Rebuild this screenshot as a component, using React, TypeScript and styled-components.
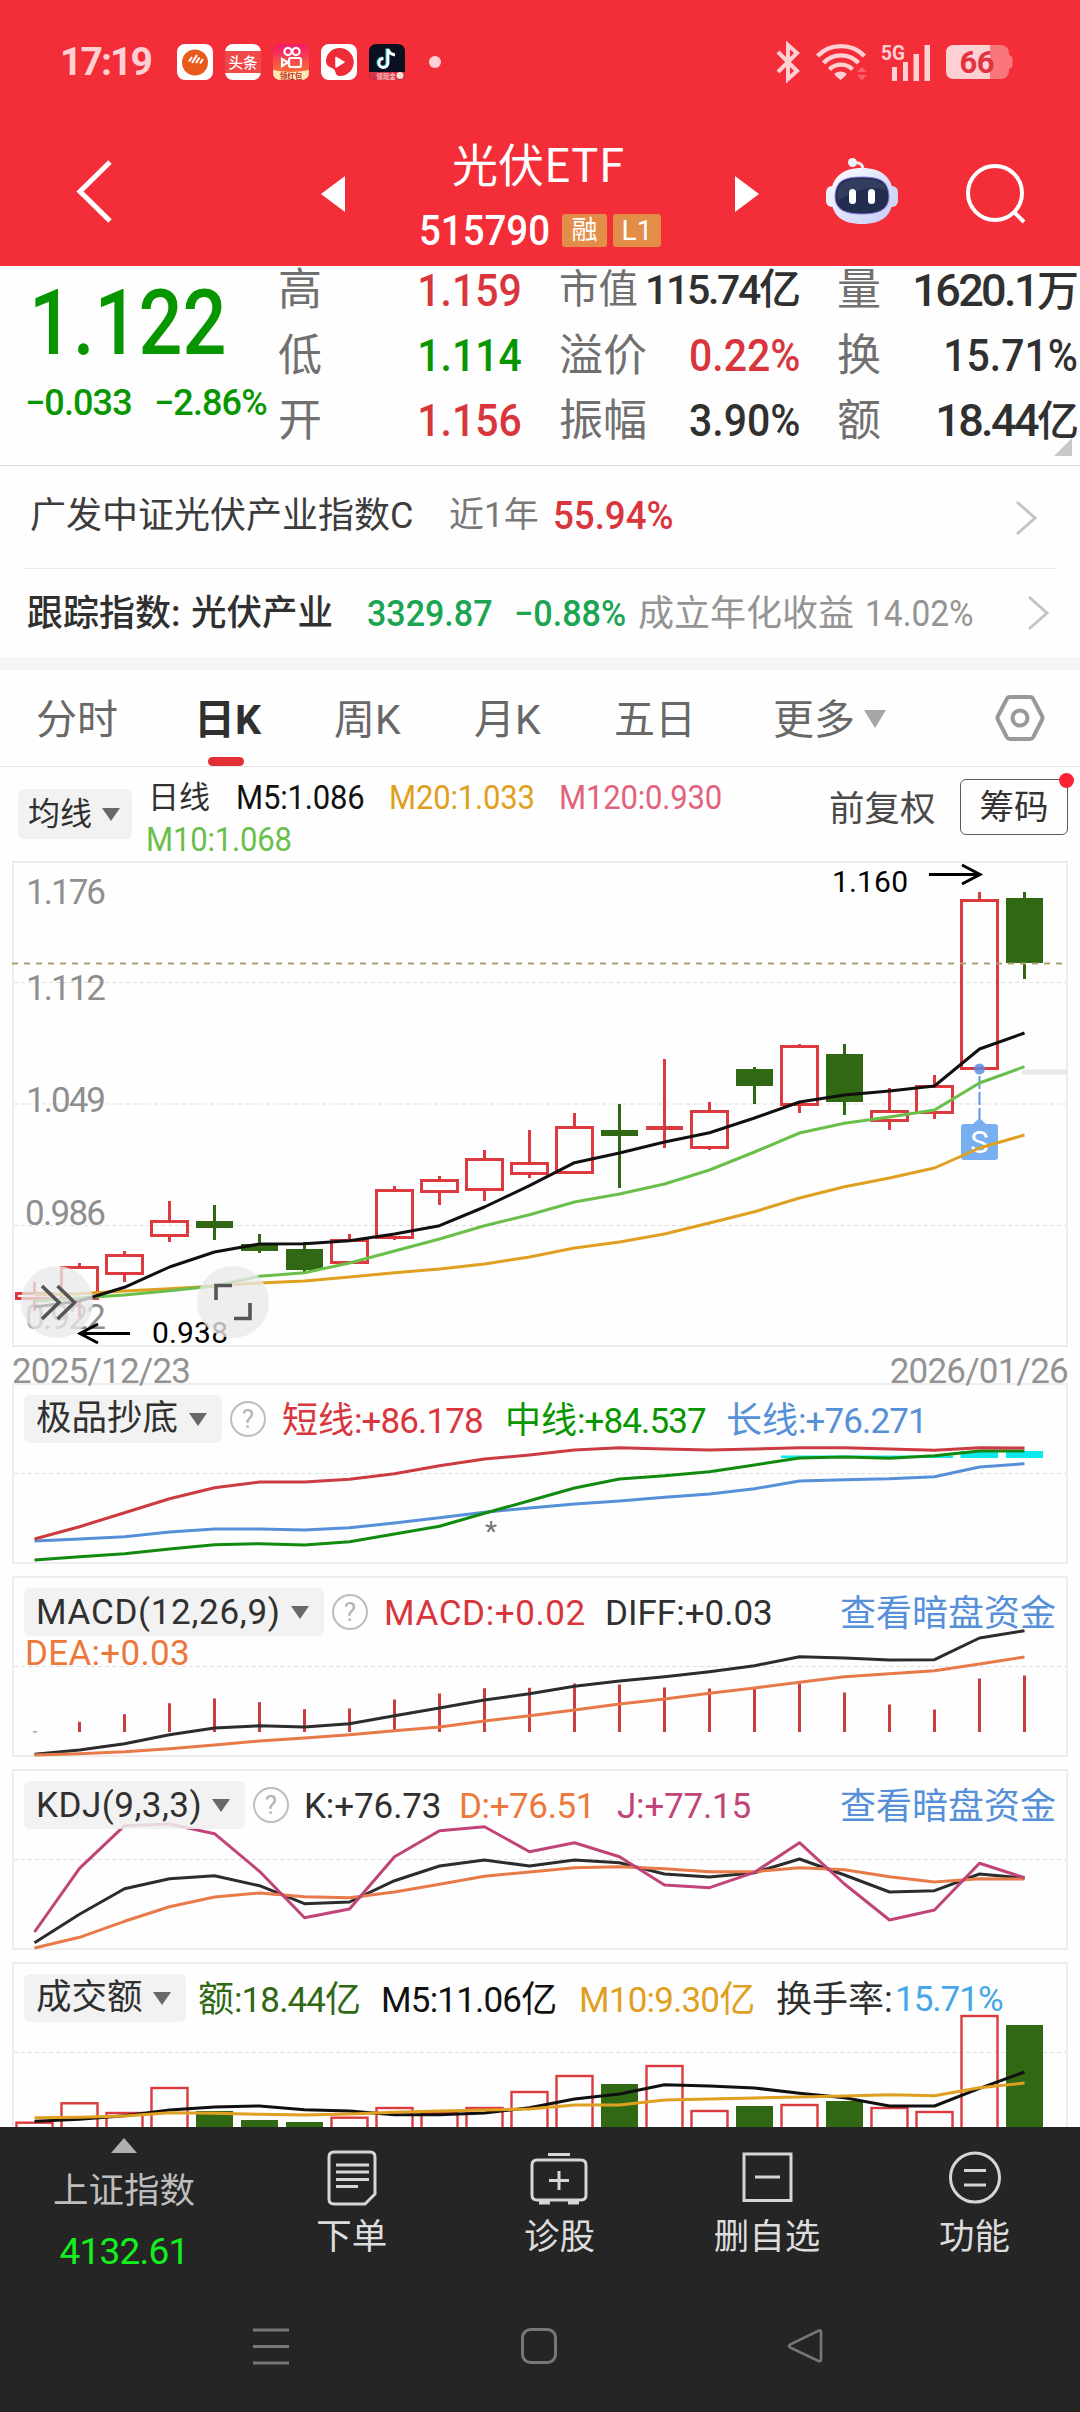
import React from "react";
import styled, { createGlobalStyle } from "styled-components";

const RED = "#d8363c";
const GREEN = "#089600";
const CANDLE_RED = "#dc3a3e";
const CANDLE_GREEN = "#306814";
const INK = "#303030";

const Global = createGlobalStyle`
  * { box-sizing: border-box; }
  body { margin: 0; background: #fff; }
`;

const Screen = styled.div`
  width: 1080px;
  height: 2412px;
  overflow: hidden;
  display: flex;
  flex-direction: column;
  background: #fefefe;
  color: ${INK};
  font-family: Roboto, "Noto Sans CJK SC", sans-serif;
  line-height: 1;
`;

/* A run of text in a box of known width; `sp` tracks the glyphs, `nx` condenses them. */
const Txt = styled.span<{
  s: number; w?: number; ml?: number; sp?: number; c?: string; b?: number; right?: boolean; up?: number; down?: number; nx?: number;
}>`
  flex: none;
  display: block;
  white-space: nowrap;
  font-size: ${(p) => p.s}px;
  width: ${(p) => (p.w ? p.w + "px" : "auto")};
  margin-left: ${(p) => p.ml ?? 0}px;
  letter-spacing: ${(p) => p.sp ?? 0}px;
  color: ${(p) => p.c ?? "inherit"};
  font-weight: ${(p) => p.b ?? 400};
  text-align: ${(p) => (p.right ? "right" : "left")};
  padding-bottom: ${(p) => p.up ?? 0}px;
  padding-top: ${(p) => p.down ?? 0}px;
  transform: ${(p) => (p.nx ? `scaleX(${p.nx})` : "none")};
  transform-origin: ${(p) => (p.right ? "right" : "left")} center;
`;

const Han = styled.span<{ s: number; sp?: number }>`
  font-size: ${(p) => p.s}px;
  letter-spacing: ${(p) => p.sp ?? 0}px;
`;

/* ---------- header ---------- */
const Header = styled.header`
  flex: none;
  height: 266px;
  background: #f32e38;
  color: #fff;
`;
const StatusBar = styled.div`
  height: 124px;
  padding: 0 67px 0 60px;
  display: flex;
  align-items: center;
  justify-content: space-between;
`;
const StatusGroup = styled.div<{ gap: number }>`
  display: flex;
  align-items: center;
  gap: ${(p) => p.gap}px;
`;
const StatusDot = styled.i`
  width: 12px;
  height: 12px;
  margin-left: 12px;
  border-radius: 50%;
  background: #ffd3d5;
`;
const TitleBar = styled.div`
  height: 142px;
  display: flex;
  align-items: flex-start;
`;
const Glyph = styled.svg<{ ml?: number; mt?: number }>`
  flex: none;
  display: block;
  overflow: visible;
  margin-left: ${(p) => p.ml ?? 0}px;
  margin-top: ${(p) => p.mt ?? 0}px;
`;
const TitleBlock = styled.div`
  width: 250px;
  margin-left: 70px;
  padding-top: 15px;
  display: flex;
  flex-direction: column;
`;
const Title = styled.h1`
  margin: 0 0 0 37px;
  font: 400 46px/46px "Noto Sans CJK SC", sans-serif;
  white-space: nowrap;
`;
const CodeRow = styled.div`
  display: flex;
  align-items: center;
  height: 42px;
  margin-top: 24px;
  padding-left: 4px;
`;
const Tag = styled.span<{ w: number; s: number; ml: number }>`
  width: ${(p) => p.w}px;
  margin-left: ${(p) => p.ml}px;
  height: 33px;
  border-radius: 3px;
  background: #e28e48;
  font-size: ${(p) => p.s}px;
  line-height: 33px;
  text-align: center;
`;

/* ---------- quote ---------- */
const Quote = styled.section`
  flex: none;
  height: 200px;
  display: flex;
  border-bottom: 1px solid #dedede;
  position: relative;
`;
const PriceCol = styled.div`
  width: 278px;
  color: ${GREEN};
`;
const ChangeRow = styled.div`
  display: flex;
  padding: 16px 0 0 25px;
`;
const Stats = styled.div<{ w: number; ml?: number }>`
  width: ${(p) => p.w}px;
  margin-left: ${(p) => p.ml ?? 0}px;
  flex: none;
`;
const StatRow = styled.div`
  height: 65.4px;
  display: flex;
  align-items: center;
  justify-content: space-between;
  padding-bottom: 17px;
`;
const Corner = styled.i`
  position: absolute;
  right: 8px;
  bottom: 9px;
  border-style: solid;
  border-width: 0 0 18px 18px;
  border-color: transparent transparent #c8c8c8 transparent;
`;

/* ---------- linked rows ---------- */
const LinkRow = styled.div<{ h: number; pl: number; rule?: boolean }>`
  flex: none;
  height: ${(p) => p.h}px;
  display: flex;
  align-items: center;
  padding-left: ${(p) => p.pl}px;
  background: linear-gradient(#ebebeb, #ebebeb) no-repeat 24px 100% / ${(p) => (p.rule ? "1032px 1px" : "0 0")};
`;
const Band = styled.div`
  flex: none;
  height: 13px;
  background: #f5f5f5;
`;

/* ---------- tabs ---------- */
const Tabs = styled.nav`
  flex: none;
  height: 97px;
  display: flex;
  border-bottom: 1px solid #e4e4e4;
  color: #686868;
`;
const Tab = styled.div<{ w: number; pl: number; active?: boolean }>`
  width: ${(p) => p.w}px;
  padding: 30px 0 0 ${(p) => p.pl}px;
  display: flex;
  align-items: flex-start;
  font-size: 41px;
  white-space: nowrap;
  font-weight: ${(p) => (p.active ? 700 : 400)};
  color: ${(p) => (p.active ? INK : "inherit")};
`;
const TabLabel = styled.span<{ active?: boolean }>`
  display: flex;
  flex-direction: column;
  align-items: center;
  &::after {
    content: "";
    display: ${(p) => (p.active ? "block" : "none")};
    width: 36px;
    height: 9px;
    margin-top: 16px;
    margin-left: -4px;
    border-radius: 5px;
    background: #e22e34;
  }
`;

/* ---------- moving-average legend ---------- */
const Legend = styled.div`
  flex: none;
  height: 94px;
  display: flex;
  align-items: flex-start;
`;
const Pick = styled.button<{ w: number; h: number; pl: number; pr?: number; ml?: number; mt?: number }>`
  flex: none;
  border: 0;
  font-family: inherit;
  line-height: 1;
  color: ${INK};
  width: ${(p) => p.w}px;
  height: ${(p) => p.h}px;
  margin: ${(p) => p.mt ?? 0}px 0 0 ${(p) => p.ml ?? 0}px;
  padding: 0 ${(p) => p.pr ?? 15}px 0 ${(p) => p.pl}px;
  border-radius: 6px;
  background: rgba(240, 240, 240, 0.86);
  display: flex;
  align-items: center;
  justify-content: space-between;
  &::after {
    content: "";
    border-style: solid;
    border-width: 13px 9px 0;
    border-color: #686868 transparent transparent;
  }
`;
const AverageLines = styled.div`
  width: 672px;
  margin-left: 14px;
  padding-top: 9px;
`;
const AverageRow = styled.div`
  height: 42px;
  display: flex;
  align-items: center;
`;
const ChipButton = styled.div`
  position: relative;
  width: 108px;
  height: 56px;
  margin: 12px 0 0 23px;
  border: 1px solid #5c5c5c;
  border-radius: 6px;
  display: flex;
  align-items: center;
  justify-content: center;
  &::after {
    content: "";
    position: absolute;
    right: -7px;
    top: -7px;
    width: 15px;
    height: 15px;
    border-radius: 50%;
    background: #fb2436;
  }
`;

/* ---------- charts ---------- */
const Charts = styled.main`
  flex: none;
  height: 1266px;
  overflow: hidden;
  padding: 0 12px;
  display: flex;
  flex-direction: column;
`;
const Panel = styled.section<{ h: number; gap?: number }>`
  position: relative;
  flex: none;
  height: ${(p) => p.h}px;
  margin-bottom: ${(p) => p.gap ?? 0}px;
  border: 2px solid #eeeeee;
`;
const Plot = styled.svg`
  position: absolute;
  left: -2px;
  top: -2px;
  display: block;
  overflow: visible;
`;
const PanelHead = styled.div`
  position: relative;
  height: 48px;
  margin-top: 10px;
  padding-left: 10px;
  display: flex;
  align-items: center;
  & > ${Txt} { padding-top: 3px; }
`;
const PanelSub = styled.div`
  position: relative;
  padding: 0 0 0 11px;
`;
const Help = styled.span`
  flex: none;
  width: 36px;
  height: 36px;
  margin-left: 8px;
  border: 2px solid #bdbdbd;
  border-radius: 50%;
  color: #b4b4b4;
  font-size: 26px;
  line-height: 33px;
  text-align: center;
`;
const Dates = styled.div`
  position: relative;
  z-index: 1;
  flex: none;
  height: 36px;
  padding-top: 7px;
  display: flex;
  justify-content: space-between;
  align-items: flex-start;
  color: #939393;
`;

/* ---------- bottom ---------- */
const Dock = styled.footer`
  flex: none;
  height: 285px;
  background: #252525;
`;
const DockRow = styled.div`
  display: flex;
  height: 156px;
`;
const IndexCell = styled.div`
  width: 248px;
  padding-top: 11px;
  display: flex;
  flex-direction: column;
  align-items: center;
`;
const DockCell = styled.div`
  width: 207.6px;
  padding-top: 20px;
  display: flex;
  flex-direction: column;
  align-items: center;
  gap: 12px;
`;
const NavRow = styled.div`
  display: flex;
  align-items: center;
  height: 125px;
`;

/* ---------- data, in page coordinates ---------- */
const cx = (i: number) => 34.5 + 45 * i;
// direction, high, body top, body bottom, low
const candles: [string, number, number, number, number][] = [
  ["r", 1282, 1292, 1300, 1311], ["r", 1263, 1266, 1300, 1317], ["r", 1251, 1254, 1275, 1282],
  ["r", 1201, 1220, 1237, 1242], ["g", 1205, 1221, 1228, 1240], ["g", 1234, 1244, 1251, 1253],
  ["g", 1242, 1249, 1270, 1272], ["r", 1234, 1239, 1264, 1264], ["r", 1186, 1189, 1239, 1240],
  ["r", 1176, 1179, 1193, 1205], ["r", 1150, 1158, 1191, 1201], ["r", 1130, 1162, 1175, 1178],
  ["r", 1113, 1126, 1174, 1174], ["g", 1104, 1130, 1136, 1188], ["r", 1059, 1126, 1130, 1148],
  ["r", 1102, 1110, 1149, 1150], ["g", 1067, 1069, 1086, 1104], ["r", 1044, 1045, 1106, 1113],
  ["g", 1044, 1054, 1102, 1115], ["r", 1088, 1110, 1122, 1130], ["r", 1075, 1085, 1114, 1119],
  ["r", 892, 899, 1070, 1070], ["g", 892, 898, 963, 979],
];
const ma5 = [1307, 1301, 1287.3, 1267, 1252, 1244, 1243.7, 1240.7, 1234, 1225.7, 1207, 1185.7, 1162.7, 1153, 1142, 1132.7, 1118, 1102, 1095, 1091, 1086, 1049, 1033];
const ma10 = [1301, 1298, 1295, 1290.7, 1286, 1276.3, 1272.7, 1263, 1251, 1239, 1225.7, 1214.7, 1202, 1194, 1184, 1170, 1152, 1133, 1123.3, 1117, 1110, 1083, 1066.7];
const ma20 = [1295, 1293.7, 1291, 1288.7, 1286, 1283, 1281, 1277, 1272.7, 1269, 1264, 1257, 1248, 1242, 1234, 1223, 1211.7, 1198, 1186.7, 1178, 1168, 1148, 1135];
const shortLine = [1539, 1526.7, 1512.7, 1498.7, 1487.7, 1482, 1482, 1479.3, 1473.7, 1465.7, 1459, 1455, 1450, 1447.7, 1449, 1450, 1449, 1447.7, 1447.7, 1449, 1450.3, 1447.7, 1448];
const longLine = [1541, 1539, 1536.7, 1532, 1529, 1529, 1530, 1527.7, 1523, 1517.7, 1512.3, 1508, 1504, 1501, 1497.3, 1494, 1488.7, 1481, 1479.7, 1478.7, 1476.7, 1467, 1463.7];
const midLine = [1560, 1556.7, 1553.7, 1549, 1544.7, 1543.7, 1545, 1541.7, 1534, 1526.3, 1513.3, 1500.7, 1488, 1479, 1475.7, 1471.7, 1465, 1458, 1457, 1458.3, 1455.7, 1451, 1451];
const macdBars = [1732, 1722.3, 1714.7, 1703.7, 1699, 1702.7, 1709.7, 1709, 1700, 1694, 1688.7, 1688.3, 1684, 1685, 1688, 1689, 1688.3, 1683, 1693, 1705, 1710, 1679, 1676];
const diff = [1754.3, 1750, 1743.7, 1734.7, 1728, 1725.7, 1727, 1723.7, 1715.7, 1708, 1700, 1693.7, 1686.3, 1681, 1676.7, 1671.7, 1665.7, 1656.7, 1658, 1660, 1659.7, 1638, 1630.7];
const dea = [1755, 1753.7, 1751.7, 1748.7, 1745, 1741, 1738, 1734.7, 1730.7, 1727, 1721, 1715.7, 1710, 1704, 1699, 1693.3, 1688, 1682.3, 1676.7, 1673.7, 1670.7, 1664, 1657];
const kLine = [1942.7, 1914.3, 1888.7, 1878.7, 1875.7, 1885.7, 1903.7, 1902, 1880.7, 1866, 1860, 1866, 1860, 1862.7, 1874, 1877, 1872.7, 1859, 1875, 1892, 1890.7, 1874, 1878];
const dLine = [1948, 1937.3, 1921.3, 1906.7, 1897, 1893, 1896.7, 1897.7, 1892, 1884.3, 1876.3, 1872, 1867.7, 1866.7, 1868.7, 1871.7, 1871.7, 1867.7, 1869.7, 1876.7, 1882, 1878.7, 1879];
const jLine = [1932, 1868.3, 1825.7, 1824, 1833.7, 1871.3, 1917.7, 1909, 1856.7, 1830.7, 1826.7, 1851.7, 1842.7, 1856.7, 1885, 1887.7, 1872.3, 1842.7, 1884, 1920, 1910, 1863.3, 1877.7];
const volume = [2121.7, 2102.3, 2112, 2087, 2111, 2120, 2122, 2116.7, 2107, 2112, 2107, 2091, 2075, 2084, 2065, 2110, 2106, 2104, 2101, 2107, 2111, 2015, 2025];
const vol5 = [2121.3, 2119.3, 2115.7, 2110, 2107, 2106, 2109.7, 2111, 2114.7, 2114.7, 2113, 2107.7, 2099, 2094, 2084.7, 2086, 2088, 2093.3, 2097.7, 2106, 2106, 2088.3, 2072];
const vol10 = [2117.7, 2117.3, 2116, 2112.7, 2113.3, 2114.3, 2115, 2114, 2112.3, 2111, 2110, 2109, 2105, 2105, 2100, 2099, 2098, 2097, 2096, 2094.7, 2095.7, 2087.7, 2083];

const Line = ({ ys, c, w = 3 }: { ys: number[]; c: string; w?: number }) => (
  <polyline points={ys.map((y, i) => `${cx(i)},${y}`).join(" ")} fill="none" stroke={c} strokeWidth={w} strokeLinejoin="round" />
);
const Grid = ({ y }: { y: number }) => (
  <line x1="14" x2="1066" y1={y} y2={y} stroke="#dedede" strokeWidth="1" strokeDasharray="4 3" />
);
const Area = ({ top, h, children }: { top: number; h: number; children: React.ReactNode }) => (
  <Plot width="1056" height={h} viewBox={`12 ${top} 1056 ${h}`}>{children}</Plot>
);

const Candle = ({ i }: { i: number }) => {
  const [dir, hi, t, b, lo] = candles[i];
  const x = cx(i);
  if (dir === "g" || b - t < 6)
    return (
      <g fill={dir === "g" ? CANDLE_GREEN : CANDLE_RED}>
        <rect x={x - 1.5} y={hi} width="3" height={lo - hi} />
        <rect x={x - 18.5} y={t} width="37" height={b - t} />
      </g>
    );
  return (
    <g stroke={CANDLE_RED} strokeWidth="3" fill="none">
      <path d={`M${x} ${hi}V${t + 1}M${x} ${b - 1}V${lo}`} />
      <rect x={x - 18} y={t + 1.5} width="36" height={b - t - 3} />
    </g>
  );
};

const KChart = () => (
  <Area top={861} h={486}>
    {[982.5, 1104, 1225.5].map((y) => <Grid key={y} y={y} />)}
    <g fontFamily="Roboto" fontSize="35" fill="#8f8f8f">
      <text x="26" y="904" textLength="80">1.176</text>
      <text x="26" y="1000" textLength="80">1.112</text>
      <text x="26" y="1112" textLength="80">1.049</text>
      <text x="25" y="1225" textLength="81">0.986</text>
      <text x="25" y="1329" textLength="81">0.922</text>
    </g>
    <rect x="1022" y="1069.5" width="45" height="5" fill="#e8e8e8" />
    {candles.map((_, i) => <Candle key={i} i={i} />)}
    <line x1="12" x2="1066" y1="963.5" y2="963.5" stroke="#aca06c" strokeWidth="2" strokeDasharray="6 6" />
    <circle cx="979.5" cy="1069" r="5.5" fill="#5a8ee0" opacity="0.85" />
    <path d="M979.5 1076V1119" stroke="#5b97e6" strokeWidth="2" strokeDasharray="13 3" />
    <path d="M964 1124H973L979.5 1118L986 1124H995Q998 1124 998 1127V1157Q998 1160 995 1160H964Q961 1160 961 1157V1127Q961 1124 964 1124Z" fill="#78aff0" />
    <text x="979.5" y="1153" textAnchor="middle" fontFamily="Roboto" fontSize="31" fill="#fff">S</text>
    <Line ys={ma20} c="#dfa021" />
    <Line ys={ma10} c="#6abf4b" />
    <Line ys={ma5} c="#101010" />
    <g fontFamily="Roboto" fontSize="30" fill="#000">
      <text x="832" y="892" textLength="76">1.160</text>
      <text x="152" y="1343" textLength="76">0.938</text>
    </g>
    <g stroke="#000" strokeWidth="3" fill="none">
      <path d="M929 874.5H979M962 865L980 874.5L962 884" />
      <path d="M130 1333.5H80M98 1324L80 1333.5L98 1343" />
    </g>
    <circle cx="57" cy="1302" r="36" fill="#e9e9e9" opacity="0.78" />
    <circle cx="233" cy="1302" r="36" fill="#e9e9e9" opacity="0.78" />
    <g stroke="#555" strokeWidth="3.6" fill="none">
      <path d="M42 1286L59 1302.5L42 1319M57.5 1286L74.5 1302.5L57.5 1319" />
      <path d="M216 1300V1285.5H232M250 1303V1318.5H234" />
    </g>
  </Area>
);

const PickBox = ({ w, children }: { w: number; children: React.ReactNode }) => (
  <Pick w={w} h={48} pl={12}>{children}</Pick>
);

const tone = "#ffd0d3";
const AppIcons = () => (
  <StatusGroup gap={12}>
    <Txt s={39} w={105} b={700} sp={-1.9} c={tone}>17:19</Txt>
    <Glyph width="36" height="36" viewBox="0 0 36 36">
      <rect width="36" height="36" rx="8" fill="#fff" /><circle cx="18" cy="18.5" r="13" fill="#ea5a1c" />
      <path d="M12 17.500L15 13M15 19L20 11M19 19L22.500 13.500M23 19.500L26 15" stroke="#fff" strokeWidth="2" />
    </Glyph>
    <Glyph width="36" height="36" viewBox="0 0 36 36">
      <rect width="36" height="36" rx="8" fill="#fff" /><rect y="7" width="36" height="22" fill="#f04848" />
      <text x="18" y="24" textAnchor="middle" fontSize="14.5" fontWeight="500" fill="#fff" fontFamily="Noto Sans CJK SC">头条</text>
    </Glyph>
    <Glyph width="36" height="36" viewBox="0 0 36 36">
      <defs><linearGradient id="ks" x1="0" y1="0" x2="0" y2="1"><stop offset="0" stopColor="#f5156c" /><stop offset="1" stopColor="#f98a26" /></linearGradient></defs>
      <rect width="36" height="36" rx="8" fill="url(#ks)" />
      <path d="M0 26Q18 30 36 26V28Q36 36 28 36H8Q0 36 0 28Z" fill="#fde9b8" />
      <g fill="none" stroke="#fff" strokeWidth="2.2"><circle cx="15" cy="7.5" r="3.6" /><circle cx="23" cy="7.5" r="3.6" /><rect x="16" y="14" width="12" height="9" rx="2" /><path d="M9 15L15 18.5L9 22Z" /></g>
      <text x="18" y="34.5" textAnchor="middle" fontSize="7.5" fontWeight="700" fill="#c0301c" fontFamily="Noto Sans CJK SC">领红包</text>
    </Glyph>
    <Glyph width="36" height="36" viewBox="0 0 36 36">
      <rect width="36" height="36" rx="8" fill="#fff" />
      <path d="M18.5 4A14 14 0 1 1 19 32C13 32 16 26 11 24C6 22 5 20 5 17A14 13 0 0 1 18.5 4Z" fill="#ee2b36" />
      <path d="M15 13.500V23L23 18.200Z" fill="#fff" stroke="#fff" strokeWidth="1.500" strokeLinejoin="round" />
    </Glyph>
    <Glyph width="36" height="36" viewBox="0 0 36 36">
      <path d="M8 0H28Q36 0 36 8V28Q36 36 28 36H8Q0 36 0 28V8Q0 0 8 0Z" fill="#0a1020" />
      <path d="M0 28H36Q36 36 28 36H8Q0 36 0 28Z" fill="#d8354a" />
      <path d="M19 5V19A4.500 4.500 0 1 1 14.500 14.500M19 5C20 9 23 10.500 26 11" fill="none" stroke="#35d8dc" strokeWidth="3" transform="translate(-1 -0.5)" />
      <path d="M19 5V19A4.500 4.500 0 1 1 14.500 14.500M19 5C20 9 23 10.500 26 11" fill="none" stroke="#fff" strokeWidth="2.8" />
      <text x="17" y="34.5" textAnchor="middle" fontSize="6.5" fontWeight="500" fill="#ffd9d4" fontFamily="Noto Sans CJK SC">领现金</text>
      <circle cx="31" cy="31.5" r="3.5" fill="#fbe0d0" />
    </Glyph>
    <StatusDot />
  </StatusGroup>
);

const SystemIcons = () => (
  <StatusGroup gap={16}>
    <Glyph width="24" height="38" viewBox="0 0 24 38">
      <path d="M2 9L21 28L12 36V2L21 10L2 29" fill="none" stroke={tone} strokeWidth="4" />
    </Glyph>
    <Glyph width="50" height="38" viewBox="0 0 50 38">
      <g fill="none" stroke={tone} strokeWidth="4.4"><path d="M1.5 13A33 33 0 0 1 48.5 13M7.5 20A24 24 0 0 1 42.5 20M13.5 26.5A16 16 0 0 1 36.5 26.5" /></g>
      <path d="M18.5 30.500Q24.500 26.500 30.500 30.500Q31 32 24.500 37Q18 32 18.500 30.500Z" fill={tone} />
      <path d="M41 29L46 24L51 29ZM41 32H51L46 37Z" fill="#f8616a" />
    </Glyph>
    <Glyph width="48" height="38" viewBox="0 0 48 38">
      <text x="-1" y="17" fontFamily="Roboto" fontSize="21" fontWeight="700" fill={tone} textLength="24" lengthAdjust="spacingAndGlyphs">5G</text>
      <path d="M10 24H15V38H10ZM21 19H26V38H21ZM31.5 11H37V38H31.5ZM42.5 2H48V38H42.5Z" fill={tone} />
    </Glyph>
    <Glyph width="67" height="34" viewBox="0 0 67 34">
      <rect width="63" height="34" rx="8" fill="#f9767d" />
      <path d="M8 0H44V34H8Q0 34 0 26V8Q0 0 8 0Z" fill={tone} />
      <path d="M63 10Q66.5 11 66.5 14V20Q66.5 23 63 24Z" fill="#f9767d" />
      <text x="13.5" y="28" fontFamily="Roboto" fontSize="31" fontWeight="700" fill="#e0323f" textLength="35">66</text>
    </Glyph>
  </StatusGroup>
);

const Robot = () => (
  <Glyph ml={67} mt={34} width="72" height="67" viewBox="0 0 72 67">
    <defs><linearGradient id="shell" x1="0" y1="0" x2="1" y2="1"><stop offset="0" stopColor="#ffffff" /><stop offset="0.5" stopColor="#dfe3fb" /><stop offset="1" stopColor="#c6cdf5" /></linearGradient></defs>
    <path d="M26 5Q37 3 37 12" fill="none" stroke="#f3e6ee" strokeWidth="3" /><circle cx="26.5" cy="4.5" r="4.5" fill="#eef0fa" />
    <rect x="0" y="28" width="12" height="21" rx="6" fill="#eceffd" /><rect x="60" y="28" width="12" height="21" rx="6" fill="#cfd6f6" />
    <path d="M36 10C56 10 67 20 67 37C67 58 56 66 36 66C16 66 5 58 5 37C5 20 16 10 36 10Z" fill="url(#shell)" />
    <path d="M36 19C56 19 62 24 63 38C63 51 54 56 36 56C18 56 9 51 9 38C10 24 16 19 36 19Z" fill="#232d50" stroke="#8f7be8" strokeWidth="1" />
    <path d="M36 21C50 21 60 24 61 33C48 26 26 32 12 43C8 26 20 21 36 21Z" fill="#3b4562" opacity="0.7" />
    <rect x="23" y="31" width="7" height="15" rx="3.5" fill="#fff" /><rect x="42" y="31" width="7" height="15" rx="3.5" fill="#fff" />
  </Glyph>
);

const Chevron = ({ ml }: { ml: number }) => (
  <Glyph ml={ml} width="22" height="36" viewBox="0 0 22 36"><path d="M2 2L20 18L2 34" fill="none" stroke="#c4c4c4" strokeWidth="3" /></Glyph>
);

const Stat = ({ k, v, c, ks = 44, s = 45, sp = 0, han }: { k: string; v: string; c?: string; ks?: number; s?: number; sp?: number; han?: string }) => (
  <StatRow>
    <Txt s={ks} c="#707070">{k}</Txt>
    <Txt s={s} sp={sp} nx={han ? undefined : 0.91} c={c} b={500} right>{v}{han && <Han s={42} sp={-1}>{han}</Han>}</Txt>
  </StatRow>
);

export default function App() {
  return (
    <Screen>
      <Global />
      <Header>
        <StatusBar><AppIcons /><SystemIcons /></StatusBar>
        <TitleBar>
          <Glyph ml={76} mt={36} width="36" height="63" viewBox="0 0 36 63"><path d="M34 2L4 31.5L34 61" fill="none" stroke="#fff" strokeWidth="5" /></Glyph>
          <Glyph ml={209} mt={52} width="24" height="36" viewBox="0 0 24 36"><path d="M0 18L24 0V36Z" fill="#fff" /></Glyph>
          <TitleBlock>
            <Title>光伏ETF</Title>
            <CodeRow>
              <Txt s={42} w={143} nx={0.915} b={500} down={1}>515790</Txt>
              <Tag w={45} s={26} ml={0}>融</Tag>
              <Tag w={48} s={28} ml={6}>L1</Tag>
            </CodeRow>
          </TitleBlock>
          <Glyph ml={70} mt={52} width="24" height="36" viewBox="0 0 24 36"><path d="M24 18L0 0V36Z" fill="#fff" /></Glyph>
          <Robot />
          <Glyph ml={68} mt={40} width="60" height="60" viewBox="0 0 60 60"><g fill="none" stroke="#fff" strokeWidth="4"><circle cx="29" cy="29" r="27" /><path d="M47 47L58 58" /></g></Glyph>
        </TitleBar>
      </Header>

      <Quote>
        <PriceCol>
          <Txt s={90} nx={0.86} b={500} ml={29} down={13}>1.122</Txt>
          <ChangeRow>
            <Txt s={36} sp={-0.9} b={500} w={129}>−0.033</Txt>
            <Txt s={36} sp={-0.9} b={500}>−2.86%</Txt>
          </ChangeRow>
        </PriceCol>
        <Stats w={244}>
          <Stat k="高" v="1.159" c={RED} />
          <Stat k="低" v="1.114" c={GREEN} />
          <Stat k="开" v="1.156" c={RED} />
        </Stats>
        <Stats w={241} ml={37}>
          <Stat k="市值" ks={39.5} v="115.74" s={41} sp={-2.3} han="亿" />
          <Stat k="溢价" v="0.22%" c={RED} />
          <Stat k="振幅" v="3.90%" />
        </Stats>
        <Stats w={241} ml={37}>
          <Stat k="量" v="1620.1" sp={-2.6} han="万" />
          <Stat k="换" v="15.71%" />
          <Stat k="额" v="18.44" sp={-2.6} han="亿" />
        </Stats>
        <Corner />
      </Quote>

      <LinkRow h={103} pl={30} rule>
        <Txt s={36} w={419} c="#3c3c3c" up={4}>广发中证光伏产业指数C</Txt>
        <Txt s={35} w={104} c="#787878" up={4}>近1年</Txt>
        <Txt s={39} w={461} nx={0.94} c={RED} b={500} up={3}>55.94%</Txt>
        <Chevron ml={1} />
      </LinkRow>
      <LinkRow h={88} pl={27}>
        <Txt s={36} w={164} b={500} down={2}>跟踪指数:</Txt>
        <Txt s={35.5} w={176} b={500} down={2}>光伏产业</Txt>
        <Txt s={36} w={147} nx={0.945} b={500} c="#1ba452" down={1}>3329.87</Txt>
        <Txt s={36} w={124} nx={0.95} b={500} c="#1ba452" down={1}>−0.88%</Txt>
        <Txt s={36} w={227} c="#949494" down={2}>成立年化收益</Txt>
        <Txt s={36} w={162} nx={0.93} c="#949494" down={1}>14.02%</Txt>
        <Chevron ml={0} />
      </LinkRow>
      <Band />

      <Tabs>
        <Tab w={194} pl={36}>分时</Tab>
        <Tab w={140} pl={0} active><TabLabel active>日K</TabLabel></Tab>
        <Tab w={140} pl={0}>周K</Tab>
        <Tab w={140} pl={0}>月K</Tab>
        <Tab w={159} pl={0}>五日</Tab>
        <Tab w={222} pl={0}>更多
          <Glyph ml={9} mt={10} width="22" height="18" viewBox="0 0 22 18"><path d="M0 0H22L11 18Z" fill="#a6a6a6" /></Glyph>
        </Tab>
        <Glyph ml={0} mt={24} width="50" height="48" viewBox="0 0 50 48">
          <path d="M15 3H35Q37 3 38 4.5L47 22Q48 24 47 26L38 43.5Q37 45 35 45H15Q13 45 12 43.5L3 26Q2 24 3 22L12 4.5Q13 3 15 3Z" fill="none" stroke="#999" strokeWidth="4" />
          <circle cx="25" cy="24" r="7.5" fill="none" stroke="#999" strokeWidth="4" />
        </Glyph>
      </Tabs>

      <Legend>
        <Pick w={114} h={50} pl={10} pr={12} ml={18} mt={22}><Txt s={32}>均线</Txt></Pick>
        <AverageLines>
          <AverageRow>
            <Txt s={31} w={88} ml={2}>日线</Txt>
            <Txt s={33} w={153} nx={0.94} sp={-0.2} c="#111">M5:1.086</Txt>
            <Txt s={33} w={170} nx={0.94} sp={-0.2} c="#dfa021">M20:1.033</Txt>
            <Txt s={33} nx={0.94} sp={-0.2} c="#e2627c">M120:0.930</Txt>
          </AverageRow>
          <AverageRow><Txt s={33} nx={0.94} sp={-0.2} c="#6abf4b">M10:1.068</Txt></AverageRow>
        </AverageLines>
        <Txt s={35.5} w={108} ml={11} c="#4a4a4a" down={25}>前复权</Txt>
        <ChipButton><Txt s={34.5} c="#333">筹码</Txt></ChipButton>
      </Legend>

      <Charts>
        <Panel h={486}><KChart /></Panel>
        <Dates>
          <Txt s={35} sp={-0.8}>2025/12/23</Txt>
          <Txt s={35} sp={-0.8}>2026/01/26</Txt>
        </Dates>

        <Panel h={181} gap={12}>
          <Area top={1383} h={181}>
            <Grid y={1473.5} />
            <path d="M781 1455.5H953V1458H781ZM960.5 1451H998V1458H960.5ZM1006 1451H1043V1458H1006Z" fill="#0ce8ec" />
            <Line ys={longLine} c="#5590d8" />
            <Line ys={midLine} c="#128a10" />
            <Line ys={shortLine} c="#cc3b40" />
            <text x="491" y="1541" textAnchor="middle" fontFamily="Roboto" fontSize="28" fill="#777">*</text>
          </Area>
          <PanelHead>
            <PickBox w={198}><Txt s={35.5}>极品抄底</Txt></PickBox>
            <Help>?</Help>
            <Txt s={35} sp={-0.9} w={223} ml={16} c={RED}><Han s={36}>短线</Han>:+86.178</Txt>
            <Txt s={35} sp={-0.9} w={221} c={GREEN}><Han s={36}>中线</Han>:+84.537</Txt>
            <Txt s={35} sp={-0.9} c="#5590d8"><Han s={36}>长线</Han>:+76.271</Txt>
          </PanelHead>
        </Panel>

        <Panel h={181} gap={12}>
          <Area top={1576} h={181}>
            <Grid y={1666.5} />
            {macdBars.map((y, i) => <rect key={i} x={cx(i) - 1.5} y={y - 0.5} width={i ? 3 : 4} height={1732 - y + (i ? 0.5 : 0.8)} fill={i ? "#c93c40" : "#555"} />)}
            <Line ys={diff} c="#2c2c2c" />
            <Line ys={dea} c="#e87a4a" />
          </Area>
          <PanelHead>
            <PickBox w={300}><Txt s={35} sp={0.7}>MACD(12,26,9)</Txt></PickBox>
            <Help>?</Help>
            <Txt s={35} w={221} ml={16} sp={0.6} c={RED}>MACD:+0.02</Txt>
            <Txt s={35} w={235}>DIFF:+0.03</Txt>
            <Txt s={36} c="#5590d8">查看暗盘资金</Txt>
          </PanelHead>
          <PanelSub><Txt s={35} sp={0.3} c="#ec783c">DEA:+0.03</Txt></PanelSub>
        </Panel>

        <Panel h={181} gap={12}>
          <Area top={1769} h={181}>
            <Grid y={1859.5} />
            <Line ys={kLine} c="#2c2c2c" />
            <Line ys={dLine} c="#e87a4a" />
            <Line ys={jLine} c="#c04478" />
          </Area>
          <PanelHead>
            <PickBox w={221}><Txt s={35} sp={0.5}>KDJ(9,3,3)</Txt></PickBox>
            <Help>?</Help>
            <Txt s={35} w={155} ml={15} sp={-0.1}>K:+76.73</Txt>
            <Txt s={35} w={158} sp={-0.4} c="#ec783c">D:+76.51</Txt>
            <Txt s={35} w={223} sp={-0.2} c="#c04478">J:+77.15</Txt>
            <Txt s={36} c="#5590d8">查看暗盘资金</Txt>
          </PanelHead>
        </Panel>

        <Panel h={181}>
          <Area top={1962} h={181}>
            <Grid y={2052.5} />
            {volume.map((y, i) =>
              candles[i][0] === "g"
                ? <rect key={i} x={cx(i) - 18.5} y={y} width="37" height={2150 - y} fill={CANDLE_GREEN} />
                : <rect key={i} x={cx(i) - 18} y={y + 1} width="36" height={2150 - y} fill="none" stroke={CANDLE_RED} strokeWidth="2.4" />
            )}
            <Line ys={vol5} c="#101010" />
            <Line ys={vol10} c="#dfa021" />
          </Area>
          <PanelHead>
            <PickBox w={162}><Txt s={35.5}>成交额</Txt></PickBox>
            <Txt s={35} w={183} ml={12} sp={-0.9} c={CANDLE_GREEN}><Han s={36}>额</Han>:18.44<Han s={36}>亿</Han></Txt>
            <Txt s={35} w={198} sp={-0.8} c="#111">M5:11.06<Han s={36}>亿</Han></Txt>
            <Txt s={35} w={197} sp={-0.8} c="#dfa021">M10:9.30<Han s={36}>亿</Han></Txt>
            <Txt s={36} w={119}>换手率:</Txt>
            <Txt s={35} sp={-1} c="#44a6e8">15.71%</Txt>
          </PanelHead>
        </Panel>
      </Charts>

      <Dock>
        <DockRow>
          <IndexCell>
            <Glyph width="26" height="15" viewBox="0 0 26 15"><path d="M0 15L13 0L26 15Z" fill="#b0b0b0" /></Glyph>
            <Txt s={35.5} c="#bdbdbd" down={21}>上证指数</Txt>
            <Txt s={37} sp={-0.8} c="#14f01c" down={23}>4132.61</Txt>
          </IndexCell>
          <DockCell>
            <Glyph width="56" height="61" viewBox="0 0 56 61"><g fill="none" stroke="#d6d6d6" strokeWidth="3">
              <path d="M10 5H46Q51 5 51 10V47L41 57H10Q5 57 5 52V10Q5 5 10 5Z" /><path d="M12 18H45M12 25H45M12 32.5H45M12 39.5H34" /></g></Glyph>
            <Txt s={35.5} c="#dcdcdc">下单</Txt>
          </DockCell>
          <DockCell>
            <Glyph width="60" height="61" viewBox="0 0 60 61"><g fill="none" stroke="#d6d6d6" strokeWidth="3">
              <path d="M8 13H52Q57 13 57 18V48Q57 53 52 53H8Q3 53 3 48V18Q3 13 8 13ZM19 7.5H41M30 24V43M20 33.5H40M10 56H21M39 56H50" /></g></Glyph>
            <Txt s={35.5} c="#dcdcdc">诊股</Txt>
          </DockCell>
          <DockCell>
            <Glyph width="56" height="61" viewBox="0 0 56 61"><path d="M5 7H52V53.5H5ZM16 30H41" fill="none" stroke="#d6d6d6" strokeWidth="3" /></Glyph>
            <Txt s={35.5} c="#dcdcdc">删自选</Txt>
          </DockCell>
          <DockCell>
            <Glyph width="56" height="61" viewBox="0 0 56 61"><g fill="none" stroke="#d6d6d6" strokeWidth="3"><circle cx="28" cy="30.5" r="24.5" /><path d="M17 23.5H39M17 38H39" /></g></Glyph>
            <Txt s={35.5} c="#dcdcdc">功能</Txt>
          </DockCell>
        </DockRow>
        <NavRow>
          <Glyph ml={253} width="36" height="36" viewBox="0 0 36 36"><path d="M0 2H36M0 18.5H36M0 35H36" stroke="#777" strokeWidth="3" /></Glyph>
          <Glyph ml={232} width="36" height="36" viewBox="0 0 36 36"><rect x="1.5" y="1.5" width="33" height="33" rx="8" fill="none" stroke="#777" strokeWidth="3" /></Glyph>
          <Glyph ml={230} width="36" height="36" viewBox="0 0 36 36"><path d="M32 2.5Q34 2 34 4V31Q34 34 31.5 33L3 19.5Q1 18 3 16.5Z" fill="none" stroke="#777" strokeWidth="2.6" /></Glyph>
        </NavRow>
      </Dock>
    </Screen>
  );
}
